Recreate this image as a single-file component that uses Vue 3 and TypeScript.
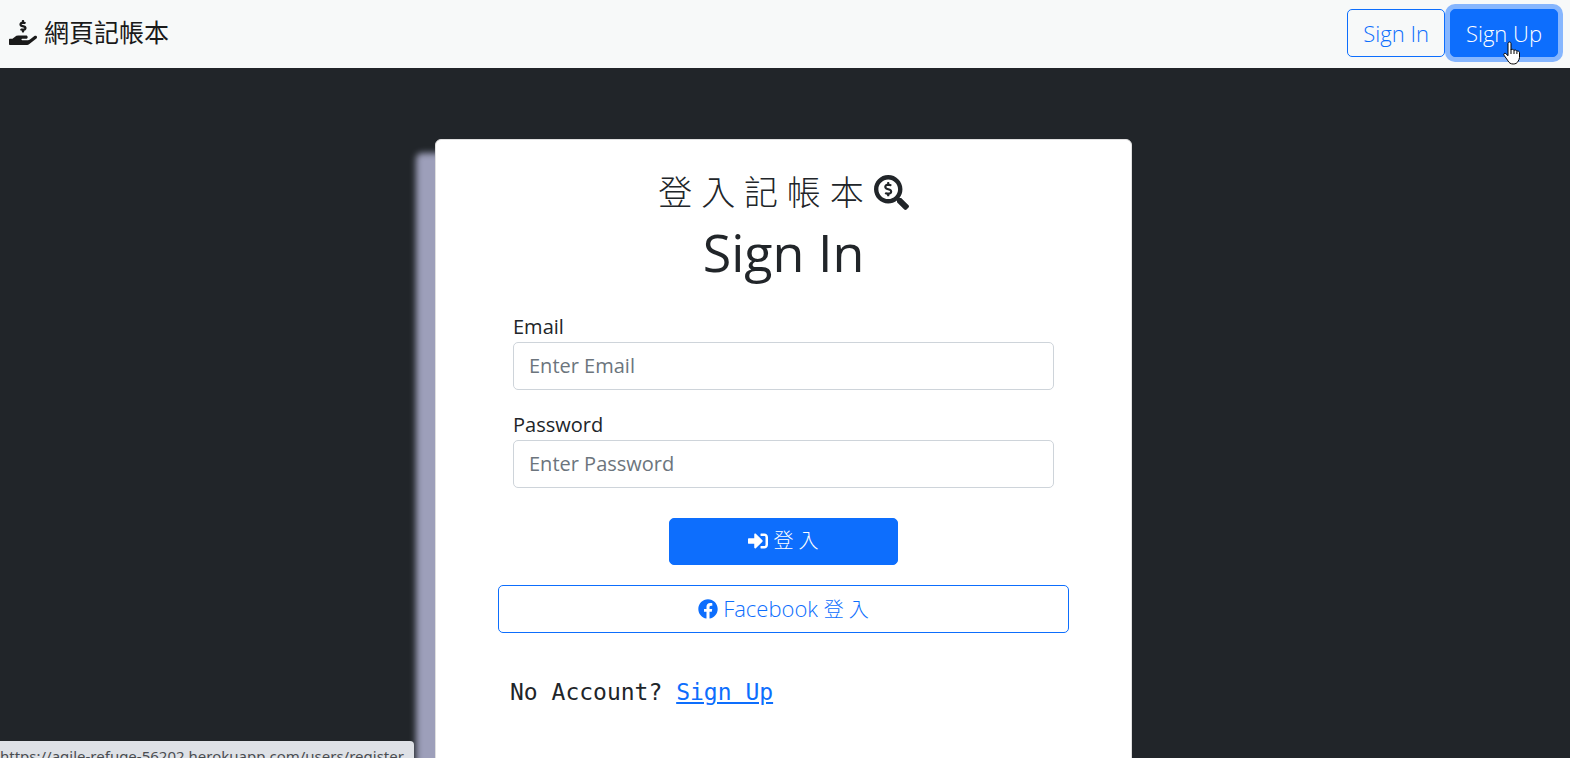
<script setup lang="ts">
import { ref } from 'vue'

interface Field {
  id: string
  label: string
  type: string
  placeholder: string
}

const fields: Field[] = [
  { id: 'email', label: 'Email', type: 'email', placeholder: 'Enter Email' },
  { id: 'password', label: 'Password', type: 'password', placeholder: 'Enter Password' },
]
const values = ref<Record<string, string>>({ email: '', password: '' })
const statusUrl = 'https://agile-refuge-56202.herokuapp.com/users/register'
</script>

<template>
  <div class="page">
    <header class="navbar">
      <a class="brand" href="#">
        <svg class="brand-icon" viewBox="0 0 576 512" aria-hidden="true">
          <path d="M257.600 144.300l50 14.300c3.600 1 6.100 4.400 6.100 8.100 0 4.600-3.800 8.400-8.400 8.400h-32.800c-3.600 0-7.100-.8-10.300-2.200-4.800-2.200-10.400-1.700-14.100 2l-17.500 17.500c-5.300 5.300-4.700 14.300 1.500 18.400 9.500 6.300 20.300 10.100 31.800 11.500V240c0 8.800 7.200 16 16 16h16c8.800 0 16-7.200 16-16v-17.600c30.300-3.600 53.300-31 49.300-63-2.900-23-20.700-41.300-42.900-47.700l-50-14.300c-3.600-1-6.100-4.400-6.100-8.100 0-4.600 3.800-8.400 8.400-8.400h32.800c3.600 0 7.100.8 10.300 2.200 4.800 2.200 10.400 1.700 14.100-2l17.500-17.500c5.300-5.300 4.700-14.300-1.500-18.400-9.500-6.300-20.300-10.100-31.800-11.500V16c0-8.800-7.200-16-16-16h-16c-8.800 0-16 7.200-16 16v17.600c-30.300 3.600-53.300 31-49.300 63 2.900 23 20.700 41.300 42.900 47.700z"/>
          <path d="M565.300 328.100c-11.800-10.700-30.200-10-42.600 0L430.300 402c-11.300 9.100-25.400 14-40 14H272c-8.800 0-16-7.200-16-16s7.200-16 16-16h78.300c15.900 0 30.700-10.900 33.300-26.600 3.300-20-12.100-37.400-31.600-37.400H192c-27 0-53.100 9.300-74.100 26.300L71.400 384H16c-8.800 0-16 7.200-16 16v96c0 8.800 7.200 16 16 16h356.800c14.500 0 28.600-4.900 40-14L564 377c15.200-12.100 16.400-35.300 1.300-48.900z"/>
        </svg>
        <span>網頁記帳本</span>
      </a>
      <nav class="nav-actions">
        <a class="btn btn-outline" href="#signin">Sign In</a>
        <a class="btn btn-primary active" href="#register">
          Sign Up
          <svg class="pointer" viewBox="0 0 18 24" aria-hidden="true">
            <path d="M6.500 1C7.600 1 8 1.800 8 2.800V9c.3-1 2.800-.9 3 .6.5-1 2.700-.7 2.900.8.600-.8 2.600-.3 2.600 1.300v4.800c0 1.400-.8 2.600-1.300 3.600-1 2-2.600 2.900-5 2.900-2.600 0-4.200-1.200-5.200-3.100L1 14.200c-.8-1.300.6-2.500 1.800-1.600L5 14.700V2.800C5 1.800 5.400 1 6.500 1z"/>
            <path d="M8 8.500V13M11 9.500V13M13.900 10.500V13"/>
          </svg>
        </a>
      </nav>
    </header>

    <main class="content">
      <section class="card">
        <h1 class="title">
          <span>登 入 記 帳 本</span>
          <svg class="title-icon" viewBox="0 0 512 512" aria-hidden="true">
            <path d="M505.040 442.660l-99.710-99.690c-4.500-4.500-10.600-7-17-7h-16.300c27.600-35.300 44-79.690 44-127.990C416.030 93.090 322.920 0 208.020 0S0 93.090 0 207.980s93.110 207.980 208.020 207.980c48.300 0 92.710-16.400 128.010-44v16.300c0 6.400 2.500 12.500 7 17l99.710 99.690c9.400 9.400 24.600 9.400 33.900 0l28.300-28.300c9.400-9.400 9.400-24.590.1-33.990zm-297.020-90.700c-79.540 0-144-64.340-144-143.980 0-79.530 64.350-143.980 144-143.980 79.540 0 144 64.340 144 143.980 0 79.530-64.350 143.980-144 143.980zm27.110-152.540l-45.010-13.500c-5.160-1.550-8.770-6.780-8.770-12.730 0-7.270 5.300-13.190 11.800-13.190h28.100c4.560 0 8.960 1.290 12.820 3.720 3.240 2.030 7.360 1.910 10.130-.73l11.750-11.210c3.530-3.370 3.330-9.210-.57-12.140-9.100-6.830-20.080-10.770-31.370-11.350V112c0-4.420-3.580-8-8-8h-16c-4.420 0-8 3.580-8 8v16.120c-23.630.63-42.680 20.550-42.680 45.070 0 19.970 12.990 37.810 31.580 43.390l45.010 13.500c5.160 1.550 8.770 6.780 8.770 12.730 0 7.270-5.300 13.190-11.800 13.190h-28.100c-4.560 0-8.960-1.290-12.820-3.720-3.240-2.030-7.360-1.910-10.130.73l-11.750 11.210c-3.530 3.370-3.330 9.210.57 12.140 9.100 6.830 20.080 10.770 31.370 11.350V304c0 4.420 3.580 8 8 8h16c4.420 0 8-3.580 8-8v-16.120c23.630-.63 42.680-20.540 42.680-45.070 0-19.970-12.990-37.810-31.590-43.390z"/>
          </svg>
        </h1>
        <h2 class="subtitle">Sign In</h2>

        <form class="form" @submit.prevent>
          <div v-for="field in fields" :key="field.id" class="field">
            <label :for="field.id">{{ field.label }}</label>
            <input :id="field.id" v-model="values[field.id]" :type="field.type" :placeholder="field.placeholder" />
          </div>
          <button class="btn btn-primary submit" type="submit">
            <svg class="btn-icon" viewBox="0 0 512 512" aria-hidden="true">
              <path d="M416 448h-84c-6.600 0-12-5.400-12-12v-40c0-6.600 5.400-12 12-12h84c17.700 0 32-14.300 32-32V160c0-17.700-14.300-32-32-32h-84c-6.600 0-12-5.400-12-12V76c0-6.600 5.400-12 12-12h84c53 0 96 43 96 96v192c0 53-43 96-96 96zm-47-209L201 71c-15-15-41-4.500-41 17v96H24c-13.300 0-24 10.700-24 24v96c0 13.300 10.700 24 24 24h136v96c0 21.500 26 32 41 17l168-168c9.300-9.400 9.300-24.600 0-34z"/>
            </svg>
            <span class="han">登 入</span>
          </button>
        </form>

        <a class="btn btn-outline facebook" href="#facebook">
          <svg class="btn-icon" viewBox="0 0 512 512" aria-hidden="true">
            <path d="M504 256C504 119 393 8 256 8S8 119 8 256c0 123.780 90.690 226.380 209.250 245V327.690h-63V256h63v-54.640c0-62.150 37-96.480 93.670-96.480 27.140 0 55.520 4.840 55.520 4.840v61h-31.280c-30.800 0-40.410 19.120-40.410 38.730V256h68.780l-11 71.690h-57.780V501C413.310 482.380 504 379.780 504 256z"/>
          </svg>
          <span>Facebook <span class="han">登 入</span></span>
        </a>

        <p class="register">No Account? <a href="#register">Sign Up</a></p>
      </section>
    </main>

    <div class="status">{{ statusUrl }}</div>
  </div>
</template>

<style>
body {
  margin: 0;
  background: #212529;
}
</style>

<style scoped>
* {
  box-sizing: border-box;
}
.page {
  height: 100vh;
  overflow: hidden;
  color: #212529;
  font: 400 20px/30px "Open Sans", "Noto Sans CJK TC", sans-serif;
}
.navbar {
  display: flex;
  align-items: flex-start;
  justify-content: space-between;
  height: 68px;
  padding: 9px 12px 0 9px;
  background: #f7f9f9;
}
.brand {
  display: flex;
  align-items: center;
  gap: 7px;
  height: 46px;
  color: #1a1a1a;
  font-size: 25px;
  text-decoration: none;
}
.brand-icon {
  width: 28px;
  height: 25px;
  fill: currentColor;
}
.nav-actions {
  display: flex;
  gap: 5px;
}
.btn {
  display: flex;
  align-items: center;
  justify-content: center;
  gap: 5px;
  height: 48px;
  padding: 0 15px;
  border: 1px solid #0d6efd;
  border-radius: 5px;
  font: inherit;
  font-size: 22px;
  font-weight: 300;
  text-decoration: none;
  cursor: pointer;
}
.btn-outline {
  color: #0d6efd;
}
.btn-primary {
  background: #0d6efd;
  color: #fff;
}
.active {
  position: relative;
  box-shadow: 0 0 0 5px #86b6fe;
}
.pointer {
  position: absolute;
  top: 31px;
  right: 36px;
  width: 18px;
  height: 24px;
  fill: #fff;
  stroke: #000;
  stroke-width: 1;
}
.btn-icon {
  width: 20px;
  height: 20px;
  fill: currentColor;
}
.han {
  font-size: 20px;
}
.content {
  display: flex;
  justify-content: center;
  padding: 71px 3px 0 0;
}
.card {
  width: 697px;
  min-height: 800px;
  padding: 30px 62px;
  border: 1px solid #dfdfdf;
  border-radius: 6px;
  background: #fff;
  box-shadow: -19px 14px 6px #9d9fba;
}
.title {
  display: flex;
  align-items: center;
  justify-content: center;
  gap: 10px;
  margin: 0;
  font-size: 34px;
  font-weight: 300;
  line-height: 44px;
}
.title-icon {
  width: 35px;
  height: 35px;
  fill: currentColor;
}
.subtitle {
  margin: 8px 0 22px;
  font-size: 52px;
  font-weight: 400;
  line-height: 60px;
  text-align: center;
}
.form {
  display: flex;
  flex-direction: column;
  padding: 8px 15px 0;
}
.field {
  display: flex;
  flex-direction: column;
  margin-bottom: 20px;
}
.field input {
  width: 100%;
  height: 48px;
  padding: 0 15px 2px;
  border: 1px solid #ced4da;
  border-radius: 5px;
  background: #fff;
  color: #212529;
  font: inherit;
}
.field input::placeholder {
  color: #6c757d;
  opacity: 1;
}
.submit {
  align-self: center;
  width: 229px;
  height: 47px;
  margin-top: 10px;
  padding-bottom: 2px;
}
.facebook {
  margin-top: 20px;
}
.register {
  margin: 44px 12px 0;
  font-family: "DejaVu Sans Mono", monospace;
  font-size: 23px;
}
.register a {
  color: #0d6efd;
}
.status {
  position: fixed;
  bottom: -13px;
  left: 0;
  height: 30px;
  padding: 0 10px 0 0;
  border-radius: 0 4px 0 0;
  background: #dee1e6;
  color: #4a4d51;
  font-family: "Noto Sans", sans-serif;
  font-size: 15px;
}
</style>
